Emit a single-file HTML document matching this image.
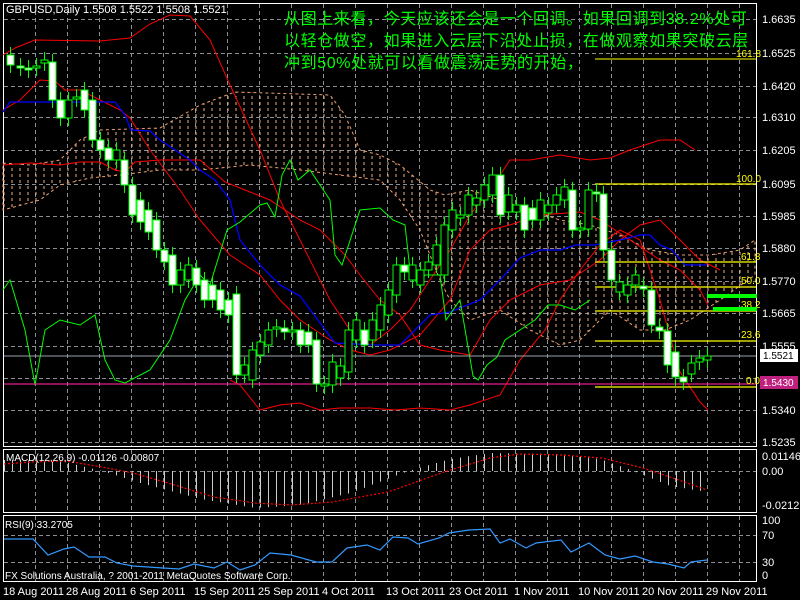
<!DOCTYPE html>
<html><head><meta charset="utf-8"><style>
html,body{margin:0;padding:0;background:#000;width:800px;height:600px;overflow:hidden}
svg{display:block}
text{font-family:"Liberation Sans",sans-serif;font-size:11px;fill:#fff}
.cn{font-family:"Liberation Sans","Noto Sans CJK SC",sans-serif;font-size:16px;fill:#00ff00;letter-spacing:0.6px}
</style></head><body>
<svg id="s" width="800" height="600" viewBox="0 0 800 600" xmlns="http://www.w3.org/2000/svg">
<defs>
<pattern id="cl" width="8" height="6" patternUnits="userSpaceOnUse"><line x1="4" y1="0" x2="4" y2="3" stroke="#f0b080" stroke-width="1"/></pattern>
</defs>
<rect width="800" height="600" fill="#000"/>
<rect x="3.5" y="3.5" width="753" height="443" fill="none" stroke="#fff"/>
<rect x="3.5" y="449.5" width="753" height="63" fill="none" stroke="#fff"/>
<rect x="3.5" y="515.5" width="753" height="66" fill="none" stroke="#fff"/>
<g id="grid" stroke="#8a8f96" stroke-dasharray="4,3" stroke-width="1"></g>
<polygon fill="url(#cl)" stroke="#f0a070" stroke-dasharray="3,3" stroke-width="1" points="3,163 30,165 60,160 80,140 100,130 160,128 200,105 235,92 330,95 345,115 360,150 380,155 400,165 430,190 445,195 470,190 500,200 530,210 560,220 590,225 620,235 650,250 680,255 710,255 740,250 755,240 755,275 720,300 690,320 665,330 640,330 610,310 580,340 560,345 530,330 500,310 470,320 450,300 440,280 420,230 400,200 380,180 340,175 300,170 250,165 200,170 160,170 120,175 90,178 60,185 40,200 3,210"/>
<g fill="none" stroke="#ff0000" stroke-width="1">
<polyline points="3,55 15,48 35,40 100,41 130,38 150,24 170,15 190,16 210,40 230,85 260,150 280,200 300,240 330,300 350,330 370,345 390,330 410,310 430,280 450,250 470,215 490,190 510,160 530,160 560,155 590,160 610,158 630,150 660,140 680,140 695,150"/>
<polyline points="3,110 20,100 40,80 55,81 65,90 80,90 100,100 120,110 130,118 150,150 180,190 200,220 230,255 260,275 280,300 300,320 330,340 350,350 370,355 390,350 420,335 450,300 470,250 490,230 510,225 540,215 580,212 600,220 630,240 660,260 680,270 700,290 708,305"/>
<polyline points="3,165 30,163 60,165 80,162 100,162 115,170 125,172 135,162 160,160 200,160 225,182 245,190 270,200 300,220 320,230 345,255 360,275 380,300 400,315 420,345 440,350 470,355 490,320 510,300 540,285 570,280 600,260 620,240 640,225 660,220 680,240 700,260 720,270"/>
<polyline points="230,380 240,385 260,410 280,405 300,403 320,410 340,408 370,408 395,410 420,408 450,410 470,405 500,395 520,360 545,330 560,300 580,270 600,245 620,230 640,240 660,300 680,372 700,402 708,410"/>
</g>
<polyline fill="none" stroke="#0000ff" stroke-width="1.3" points="3,112 10,102 115,102 125,115 131,130 150,131 160,140 175,150 190,160 200,170 215,180 230,200 240,240 260,265 280,285 300,296 335,343 375,345 400,345 420,325 430,315 450,312 480,300 500,280 520,258 540,250 560,250 576,245 595,245 620,240 640,235 650,235 660,245 672,250 685,265 707,265"/>
<polyline fill="none" stroke="#00ff00" stroke-width="1" points="3,290 10,280 25,330 35,385 45,330 60,320 80,325 95,315 105,360 115,380 125,383 150,370 170,340 185,300 200,275 210,285 227,230 240,222 260,205 267,203 275,217 282,175 290,160 298,180 310,170 330,200 335,255 342,265 360,210 380,208 393,220 405,225 410,270 418,285 425,275 440,275 446,320 460,300 473,376 478,380 487,365 497,357 505,340 520,330 535,320 548,305 560,305 575,310 590,300"/>
<line x1="4" y1="356" x2="756" y2="356" stroke="#9aa0a8" stroke-width="1"/>
<line x1="4" y1="384" x2="756" y2="384" stroke="#e0208a" stroke-width="1.3"/>
<g stroke="#ffff00" stroke-width="1.2">
<line x1="595" y1="184" x2="756" y2="184"/><line x1="595" y1="262" x2="756" y2="262"/><line x1="595" y1="287" x2="756" y2="287"/><line x1="595" y1="311" x2="756" y2="311"/><line x1="595" y1="341" x2="756" y2="341"/><line x1="595" y1="387" x2="756" y2="387"/>
<line x1="595" y1="59" x2="756" y2="59" stroke-width="1"/>
</g>
<g>
<text x="736" y="57" style="fill:#ffff00;font-size:10px">161.8</text>
<text x="736" y="182" style="fill:#ffff00;font-size:10px">100.0</text>
<text x="741" y="260" style="fill:#ffff00;font-size:10px">61.8</text>
<text x="741" y="284" style="fill:#ffff00;font-size:10px">50.0</text>
<text x="741" y="308" style="fill:#ffff00;font-size:10px">38.2</text>
<text x="741" y="338" style="fill:#ffff00;font-size:10px">23.6</text>
<text x="746" y="384" style="fill:#ffff00;font-size:10px">0.0</text>
</g>
<rect x="707" y="294" width="50" height="4" fill="#00ff00"/>
<rect x="713" y="307" width="44" height="4" fill="#00ff00"/>
<g id="candles"></g>
<g id="macd"></g>
<polyline fill="none" stroke="#ff0000" stroke-dasharray="2,2" stroke-width="1.2" points="4,464 31,462 66,461 102,467 133,473 168,483 214,497 255,503 291,505 332,502 388,492 444,472 490,458 520,454 561,455 602,458 643,468 673,478 707,490"/>
<polyline fill="none" stroke="#3399ff" stroke-width="1.2" points="4,539 33,539 48,555 64,549 74,547 89,557 105,557 117,563 133,566 148,567 163,568 179,569 194,564 214,568 227,562 240,570 255,565 270,553 291,555 316,562 332,562 347,548 367,545 380,550 393,537 408,538 418,544 439,538 449,533 469,530 490,529 500,543 510,539 526,548 536,543 561,540 571,552 589,543 605,555 620,559 635,556 653,562 668,564 684,568 691,562 707,560"/>
<text x="6" y="13">GBPUSD,Daily  1.5508 1.5522 1.5508 1.5521</text>
<text x="6" y="461" style="font-size:10px">MACD(12,26,9) -0.01126 -0.00807</text>
<text x="5" y="528" style="font-size:10px">RSI(9) 33.2705</text>
<text x="5" y="579" style="font-size:10px">FX Solutions Australia, ? 2001-2011 MetaQuotes Software Corp.</text>
<text class="cn" x="284" y="24">从图上来看，今天应该还会是一个回调。如果回调到38.2%处可</text>
<text class="cn" x="284" y="46">以轻仓做空，如果进入云层下沿处止损，在做观察如果突破云层</text>
<text class="cn" x="284" y="68">冲到50%处就可以看做震荡走势的开始，</text>
<g style="font-size:10px">
<text x="762" y="23">1.6635</text><text x="762" y="57">1.6525</text><text x="762" y="90">1.6420</text><text x="762" y="121">1.6310</text><text x="762" y="154">1.6205</text><text x="762" y="188">1.6095</text><text x="762" y="220">1.5985</text><text x="762" y="252">1.5880</text><text x="762" y="285">1.5770</text><text x="762" y="317">1.5665</text><text x="762" y="350">1.5555</text><text x="762" y="414">1.5340</text><text x="762" y="446">1.5235</text>
<text x="762" y="460">0.01146</text><text x="762" y="475">0.00</text><text x="762" y="509">-0.0212</text>
<text x="762" y="524">100</text><text x="762" y="539">70</text><text x="762" y="566">30</text><text x="762" y="579">0</text>
</g>
<rect x="760" y="349" width="38" height="13" fill="#fff"/><text x="763" y="359" style="fill:#000;font-size:10px">1.5521</text>
<rect x="760" y="376" width="38" height="13" fill="#c0207e"/><text x="763" y="386" style="font-size:10px">1.5430</text>
<g style="font-size:10px">
<text x="3" y="595">18 Aug 2011</text><text x="66" y="595">28 Aug 2011</text><text x="130" y="595">6 Sep 2011</text><text x="194" y="595">15 Sep 2011</text><text x="258" y="595">25 Sep 2011</text><text x="322" y="595">4 Oct 2011</text><text x="386" y="595">13 Oct 2011</text><text x="449" y="595">23 Oct 2011</text><text x="514" y="595">1 Nov 2011</text><text x="578" y="595">10 Nov 2011</text><text x="642" y="595">20 Nov 2011</text><text x="706" y="595">29 Nov 2011</text>
</g>
</svg>
<script>
var NS="http://www.w3.org/2000/svg";
function el(p,t,a){var e=document.createElementNS(NS,t);for(var k in a)e.setAttribute(k,a[k]);p.appendChild(e);return e;}
var g=document.getElementById('grid');
for(var x=35;x<756;x+=32)el(g,'line',{x1:x+.5,y1:4,x2:x+.5,y2:446});
[19,53,86,117,150,184,216,248,281,313,346,378,410,442].forEach(function(y){el(g,'line',{x1:4,y1:y+.5,x2:756,y2:y+.5});});
for(var x=35;x<756;x+=32){el(g,'line',{x1:x+.5,y1:450,x2:x+.5,y2:512});el(g,'line',{x1:x+.5,y1:516,x2:x+.5,y2:581});}
[471,535,562].forEach(function(y){el(g,'line',{x1:4,y1:y+.5,x2:756,y2:y+.5});});
var c=[[10,55,65],[20,66,67],[28,68,70],[36,67,66],[44,63,60],[52,62,100],[60,100,118],[68,118,100],[76,98,97],[84,90,110],[92,100,140],[100,140,150],[108,148,160],[116,160,150],[124,160,185],[132,185,215],[140,200,222],[148,210,232],[156,220,250],[164,250,262],[172,255,285],[180,285,270],[188,280,265],[196,268,285],[204,280,300],[212,285,300],[220,290,310],[228,300,315],[236,294,375],[244,375,365],[252,380,350],[260,355,342],[268,345,330],[276,328,327],[284,328,332],[292,330,330],[300,330,345],[308,332,345],[316,340,384],[324,384,384],[332,385,362],[340,378,366],[348,372,330],[356,340,320],[364,330,345],[372,340,320],[380,330,305],[388,315,290],[396,295,265],[404,265,272],[412,280,265],[420,285,270],[428,270,262],[436,265,245],[444,275,225],[452,230,210],[460,218,215],[468,215,195],[476,205,198],[484,200,185],[492,195,175],[500,175,215],[508,212,195],[516,212,205],[524,205,230],[532,208,220],[540,220,200],[548,213,205],[556,205,195],[564,200,187],[572,190,230],[580,229,228],[588,229,190],[596,192,194],[603,194,250],[611,250,280],[619,292,282],[627,295,285],[635,285,275],[643,286,289],[651,290,325],[659,327,331],[667,331,365],[675,352,377],[683,377,382],[691,374,363],[699,362,358],[707,360,356]];
var cg=document.getElementById('candles');
c.forEach(function(b){var o=b[1],cl=b[2],t=Math.min(o,cl),bt=Math.max(o,cl);if(bt-t<2)bt=t+2;
el(cg,'line',{x1:b[0]+.5,y1:t-8,x2:b[0]+.5,y2:bt+8,stroke:'#00ff00'});
el(cg,'rect',{x:b[0]-3,y:t,width:7,height:bt-t,fill:cl>o?'#fff':'#000',stroke:'#00ff00','stroke-width':1});});
var mg=document.getElementById('macd');
var mv=[[4,-11],[60,-10],[102,0],[140,12],[200,28],[255,37],[300,34],[350,22],[408,0],[450,-12],[490,-18],[560,-17],[600,-12],[633,0],[670,15],[707,21]];
function mval(x){for(var i=0;i<mv.length-1;i++){if(x>=mv[i][0]&&x<=mv[i+1][0]){var f=(x-mv[i][0])/(mv[i+1][0]-mv[i][0]);return mv[i][1]+f*(mv[i+1][1]-mv[i][1]);}}return 0;}
for(var x=4;x<=707;x+=8){var v=mval(x);el(mg,'line',{x1:x+.5,y1:471,x2:x+.5,y2:471+v,stroke:'#ccc'});}
</script>
</body></html>
